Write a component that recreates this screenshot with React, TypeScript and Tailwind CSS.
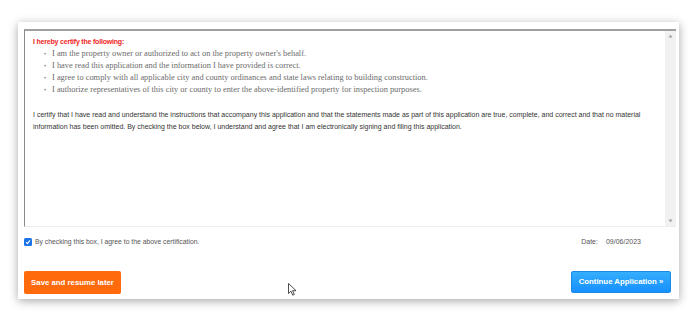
import React from "react";

const items = [
  "I am the property owner or authorized to act on the property owner's behalf.",
  "I have read this application and the information I have provided is correct.",
  "I agree to comply with all applicable city and county ordinances and state laws relating to building construction.",
  "I authorize representatives of this city or county to enter the above-identified property for inspection purposes.",
];

export default function App() {
  return (
    <div className="relative w-[698px] h-[324px] bg-white pt-[22px] pl-[18px] font-['Liberation_Sans',Arial,sans-serif]">
      <div className="w-[661px] h-[277px] bg-white shadow-[0_2px_9px_rgba(0,0,0,0.35)] pt-[7px] pl-[6px] pr-[3px] flex flex-col">
        <div className="h-[198px] flex border-t-2 border-t-[#a0a0a0] border-l border-l-[#8a8a8a] border-b border-b-[#efefe8]">
          <div className="flex-1 pl-[8px] pt-[5px]">
            <p className="text-[7px] leading-[12px] font-bold text-[#f01e23] tracking-[-0.2px]">
              I hereby certify the following:
            </p>
            <ul>
              {items.map((t, i) => (
                <li key={i} className="flex items-center h-[12px] pl-[11px] text-[8.4px] text-[#6b6b6b] font-['Liberation_Serif',serif]">
                  <span className="w-[8px] text-[6px]">•</span>
                  <span>{t}</span>
                </li>
              ))}
            </ul>
            <p className="mt-[13px] text-[7px] leading-[12px] text-[#333] pr-[24px]">
              I certify that I have read and understand the instructions that accompany this application and that the statements made as part of this application are true, complete, and correct and that no material information has been omitted. By checking the box below, I understand and agree that I am electronically signing and filing this application.
            </p>
          </div>
          <div className="w-[11px] bg-[#f1f1f1] flex flex-col justify-between items-center pt-[3px] pb-[3px]">
            <svg width="5" height="4" viewBox="0 0 5 4"><path d="M2.5 0.5 L4.5 3.5 L0.5 3.5 Z" fill="#a3a3a3" /></svg>
            <svg width="5" height="4" viewBox="0 0 5 4"><path d="M0.5 0.5 L4.5 0.5 L2.5 3.5 Z" fill="#a3a3a3" /></svg>
          </div>
        </div>
        <div className="flex items-center justify-between h-[30px] pr-[35px]">
          <label className="flex items-center gap-[3px] text-[6.8px] text-[#555]">
            <span className="w-[8px] h-[8px] rounded-[1.5px] bg-[#1a73e8] flex items-center justify-center">
              <svg width="6" height="6" viewBox="0 0 6 6"><path d="M1 3.2 L2.4 4.6 L5 1.4" stroke="white" strokeWidth="1.1" fill="none" /></svg>
            </span>
            By checking this box, I agree to the above certification.
          </label>
          <div className="text-[7px] text-[#555] flex gap-[8px]">
            <span>Date:</span>
            <span>09/06/2023</span>
          </div>
        </div>
        <div className="flex items-start justify-between mt-[14px] pr-[5px]">
          <button className="w-[97px] h-[23px] rounded-[2px] bg-[#ff6a0d] text-white text-[7.8px] font-bold">
            Save and resume later
          </button>
          <button className="w-[100px] h-[22px] rounded-[2px] bg-gradient-to-b from-[#34aefc] to-[#1590ff] border border-[#1a8ae6] text-white text-[7.8px] font-bold">
            Continue Application »
          </button>
        </div>
      </div>
      <svg className="absolute left-[288px] top-[283px]" width="9" height="13" viewBox="0 0 9 13">
        <path d="M0.5 0.5 L0.5 10.5 L3 8.2 L4.8 12.2 L6.3 11.5 L4.6 7.7 L8 7.7 Z" fill="white" stroke="#222" strokeWidth="0.8" strokeLinejoin="round" />
      </svg>
    </div>
  );
}
